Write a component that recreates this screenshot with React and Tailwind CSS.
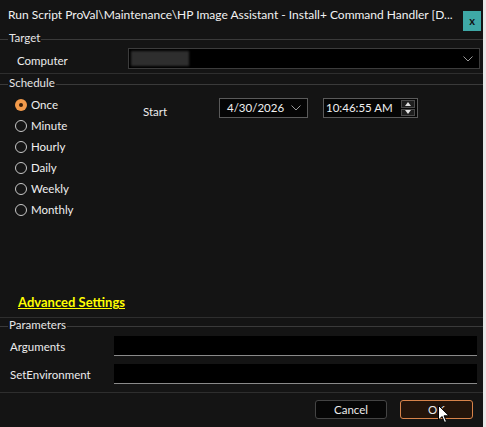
import React from "react";

const font = { fontFamily: 'Lato, "Liberation Sans", sans-serif' };

function GroupHeader({ label }) {
  return (
    <div className="flex items-center h-[14px]">
      <div className="w-[8px] h-px bg-[#3a3a3a] mt-[3px]" />
      <span className="px-[1px] text-[11.5px] leading-[14px] text-[#e6e6e6]">{label}</span>
      <div className="flex-1 h-px bg-[#3a3a3a] mt-[3px]" />
    </div>
  );
}

function Radio({ label, checked }) {
  return (
    <div className="flex items-center h-[21px]">
      {checked ? (
        <div className="w-[12px] h-[12px] rounded-full bg-[#f39a4a] flex items-center justify-center">
          <div className="w-[4px] h-[4px] rounded-full bg-[#3a1c06]" />
        </div>
      ) : (
        <div className="w-[12px] h-[12px] rounded-full border border-[#c8c8c8] bg-[#151515]" />
      )}
      <span className="ml-[4px] text-[11.5px] text-[#f0f0f0]">{label}</span>
    </div>
  );
}

function Chevron() {
  return (
    <svg width="10" height="6" viewBox="0 0 10 6" fill="none">
      <path d="M0.5 0.5 L5 5 L9.5 0.5" stroke="#9a9a9a" strokeWidth="1" />
    </svg>
  );
}

export default function App() {
  return (
    <div className="w-[486px] h-[427px] bg-[#e8e8e8] flex" style={font}>
      <div className="w-[483px] h-[427px] bg-[#141414] flex flex-col">
        {/* title bar */}
        <div className="h-[31px] flex items-start pl-[8px] pr-[2px]">
          <span className="flex-1 pt-[7px] text-[12px] leading-[16px] text-[#f2f2f2] whitespace-nowrap">
            Run Script ProVal\Maintenance\HP Image Assistant - Install+ Command Handler [D...
          </span>
          <div className="mt-[11px] w-[18px] h-[20px] bg-[#3ea8a6] flex items-center justify-center">
            <span className="text-[11px] font-bold leading-none text-[#111] mt-[-2px]">x</span>
          </div>
        </div>

        {/* Target */}
        <GroupHeader label="Target" />
        <div className="flex items-center h-[21px] mt-[3px]">
          <span className="w-[128px] pl-[17px] pt-[4px] text-[11.5px] text-[#ececec]">Computer</span>
          <div className="flex-1 mr-[3px] h-[21px] bg-black border border-[#3c3c3c] flex items-center pr-[6px]">
            <div className="ml-[2px] w-[58px] h-[15px] bg-[#2e2e2e] blur-[1px]" />
            <div className="flex-1" />
            <Chevron />
          </div>
        </div>
        <div className="h-px bg-[#2e2e2e] mt-[4px]" />

        {/* Schedule */}
        <div className="mt-[2px]">
          <GroupHeader label="Schedule" />
        </div>
        <div className="flex h-[205px]">
          <div className="pl-[15px] pt-[4px] w-[143px]">
            <Radio label="Once" checked />
            <Radio label="Minute" />
            <Radio label="Hourly" />
            <Radio label="Daily" />
            <Radio label="Weekly" />
            <Radio label="Monthly" />
          </div>
          <div className="flex items-start pt-[8px]">
            <span className="w-[76px] pt-[5px] text-[11.5px] text-[#ececec]">Start</span>
            <div className="w-[89px] h-[20px] border border-[#5a5a5a] bg-[#050505] flex items-center pl-[7px] pr-[6px]">
              <span className="flex-1 text-[11.5px] text-[#f0f0f0]">4/30/2026</span>
              <Chevron />
            </div>
            <div className="ml-[15px] w-[95px] h-[20px] border border-[#5a5a5a] bg-[#050505] flex items-center pl-[2px] pr-[2px]">
              <span className="flex-1 text-[11.5px] text-[#f0f0f0]">10:46:55 AM</span>
              <div className="w-[14px] h-[16px] flex flex-col gap-[1px]">
                <div className="flex-1 bg-[#1e1e1e] border border-[#4a4a4a] flex items-center justify-center">
                  <svg width="6" height="4" viewBox="0 0 6 4"><path d="M0 4 L3 0 L6 4Z" fill="#e0e0e0" /></svg>
                </div>
                <div className="flex-1 bg-[#1e1e1e] border border-[#4a4a4a] flex items-center justify-center">
                  <svg width="6" height="4" viewBox="0 0 6 4"><path d="M0 0 L3 4 L6 0Z" fill="#e0e0e0" /></svg>
                </div>
              </div>
            </div>
          </div>
        </div>
        <div className="h-[16px] pl-[18px] flex items-center">
          <span className="text-[13px] font-bold underline text-[#ffff00]">Advanced Settings</span>
        </div>
        <div className="h-px bg-[#2e2e2e] mt-[6px]" />

        {/* Parameters */}
        <GroupHeader label="Parameters" />
        <div className="flex items-center h-[20px] mt-[4px]">
          <span className="w-[114px] pl-[10px] pt-[2px] text-[11.5px] text-[#ececec]">Arguments</span>
          <div className="flex-1 mr-[6px] h-[20px] bg-black border-b border-[#8a8a8a]" />
        </div>
        <div className="flex items-center h-[20px] mt-[8px]">
          <span className="w-[114px] pl-[10px] pt-[2px] text-[11.5px] text-[#ececec]">SetEnvironment</span>
          <div className="flex-1 mr-[6px] h-[20px] bg-black border-b border-[#8a8a8a]" />
        </div>
        <div className="h-px bg-[#2e2e2e] mt-[8px]" />

        {/* buttons */}
        <div className="flex justify-end items-center gap-[13px] pr-[10px] mt-[7px]">
          <div className="w-[72px] h-[19px] rounded-[3px] border border-[#444] bg-[#060606] flex items-center justify-center">
            <span className="text-[11.5px] text-[#ececec]">Cancel</span>
          </div>
          <div className="relative w-[73px] h-[19px] rounded-[3px] border border-[#d8834a] bg-[#24140a] flex items-center justify-center">
            <span className="text-[11.5px] text-[#ececec]">OK</span>
            <svg className="absolute left-[37px] top-[4px]" width="12" height="19" viewBox="0 0 12 19">
              <path d="M0.5 0.5 L0.5 15 L4 11.5 L6.5 17.5 L8.5 16.5 L6 10.8 L11 10.8 Z" fill="#fff" stroke="#000" strokeWidth="1" />
            </svg>
          </div>
        </div>
      </div>
    </div>
  );
}
